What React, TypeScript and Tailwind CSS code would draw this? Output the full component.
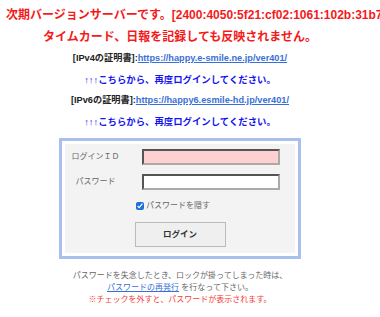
const FONT = "font-['Liberation_Sans','Noto_Sans_CJK_JP',sans-serif]";

function CertLine({ label, href }: { label: string; href: string }) {
  return (
    <p className="h-[21px] text-[9.2px] font-bold leading-[21px] text-[#222]">
      {label}:
      <a href={href} className="text-[#3a6fd8] underline">
        {href}
      </a>
    </p>
  );
}

function Relogin() {
  return (
    <p className="h-[21px] text-[9.4px] font-bold leading-[21px] text-[#1414f0]">
      ↑↑↑こちらから、再度ログインしてください。
    </p>
  );
}

export default function App() {
  return (
    <div className={`min-h-screen w-[380px] overflow-hidden bg-white ${FONT}`}>
      <div className="w-[360px] text-center">
        <div className="pt-[4px]">
          <p className="h-[22px] whitespace-nowrap text-left pl-[6px] text-[12px] font-bold leading-[22px] text-[#f51a1a]">
            次期バージョンサーバーです。[2400:4050:5f21:cf02:1061:102b:31b7:8a10]
          </p>
          <p className="h-[22px] text-[12px] font-bold leading-[22px] text-[#f51a1a]">
            タイムカード、日報を記録しても反映されません。
          </p>
          <CertLine label="[IPv4の証明書]" href="https://happy.e-smile.ne.jp/ver401/" />
          <Relogin />
          <CertLine label="[IPv6の証明書]" href="https://happy6.esmile-hd.jp/ver401/" />
          <Relogin />
        </div>

        <div className="mx-auto mt-[6px] w-[242px] border-[3px] border-[#a9c0ec] bg-white p-[3px]">
          <div className="bg-[#f3f3f3] pb-[6px] pt-[5px]">
            <div className="flex items-center">
              <span className="w-[61px] text-center text-[8px] text-[#666]">ログインＩＤ</span>
              <input
                className="ml-[16px] h-[16px] w-[138px] border-2 border-[#555] border-r-[#aaa] border-b-[#aaa] bg-[#ffcfd2] outline-none"
                readOnly
              />
            </div>
            <div className="mt-[9px] flex items-center">
              <span className="w-[61px] text-center text-[8px] text-[#666]">パスワード</span>
              <input
                type="password"
                className="ml-[16px] h-[16px] w-[138px] border-2 border-[#555] border-r-[#aaa] border-b-[#aaa] bg-white outline-none"
                readOnly
              />
            </div>
            <label className="mt-[11px] flex items-center pl-[71px] text-[8px] leading-[10px] text-[#666]">
              <input type="checkbox" defaultChecked className="m-0 mr-[2px] h-[8px] w-[8px] accent-[#1a6fd8]" />
              パスワードを隠す
            </label>
            <button
              type="button"
              className="mx-auto mt-[11px] block h-[25px] w-[91px] border border-[#bbb] bg-[#efefef] text-[8.5px] font-bold text-[#333]"
            >
              ログイン
            </button>
          </div>
        </div>

        <div className="mt-[11px] text-[8px] leading-[12px] text-[#666]">
          <p>パスワードを失念したとき、ロックが掛ってしまった時は、</p>
          <p>
            <a href="#" className="text-[#3a6fd8] underline">
              パスワードの再発行
            </a>{" "}
            を行なって下さい。
          </p>
          <p className="text-[#f53a3a]">※チェックを外すと、パスワードが表示されます。</p>
        </div>
      </div>
    </div>
  );
}
